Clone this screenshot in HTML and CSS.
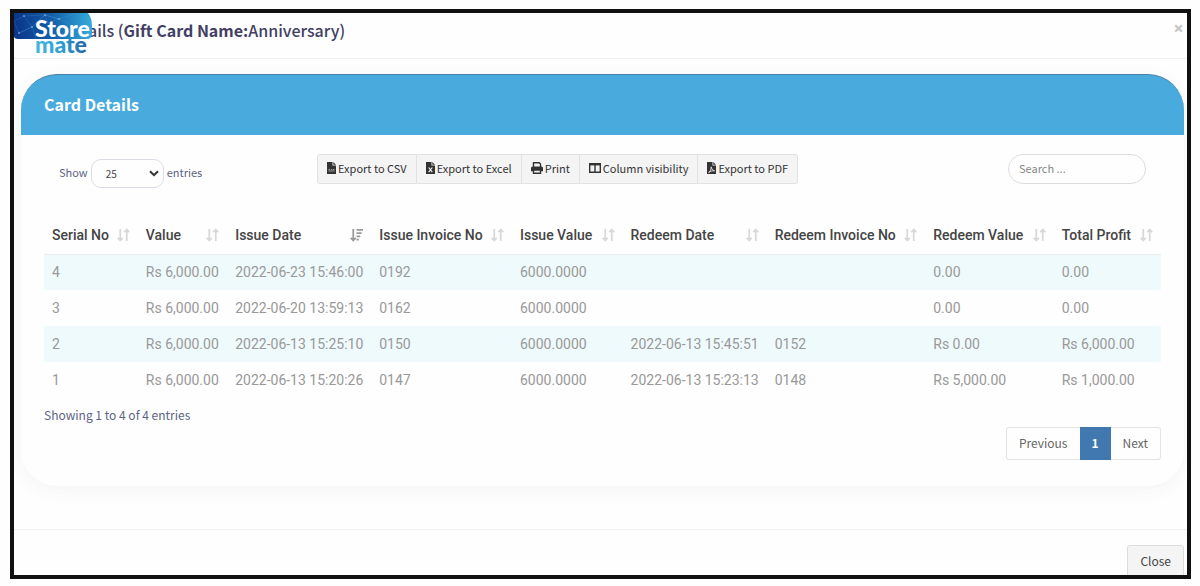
FILE: index.html
```html
<!DOCTYPE html>
<html lang="en">
<head>
    <meta charset="UTF-8">
    <meta name="viewport" content="width=device-width, initial-scale=1.0">
    <title>Gift Card Details</title>
    <link rel="stylesheet" href="styles.css">
</head>
<body>
    <svg class="sprite" aria-hidden="true">
        <symbol id="sort" viewBox="0 0 14 14">
            <path d="M3.5 0.5v12M0.8 10l2.7 2.8L6.2 10M10.5 13.5v-12M7.8 4l2.7-2.8L13.2 4" fill="none" stroke="currentColor" stroke-width="1.9"/>
        </symbol>
        <symbol id="sort-desc" viewBox="0 0 14 14">
            <path d="M3.5 0.5v12M0.8 10l2.7 2.8L6.2 10M7 1.5h7M7 5h5.5M7 8.5h4M7 12h2.5" fill="none" stroke="currentColor" stroke-width="1.9"/>
        </symbol>
    </svg>

    <div class="modal">
        <svg class="logo" width="82" height="46" viewBox="0 0 82 46" role="img" aria-label="Store mate">
            <defs>
                <linearGradient id="logoBg" x1="0" y1="0" x2="1" y2="0">
                    <stop offset="0" stop-color="#0b3488"/>
                    <stop offset="0.5" stop-color="#1260ab"/>
                    <stop offset="1" stop-color="#37acdc"/>
                </linearGradient>
                <linearGradient id="logoText" x1="0" y1="0" x2="1" y2="0">
                    <stop offset="0" stop-color="#43b9e0"/>
                    <stop offset="0.5" stop-color="#2f9fd2"/>
                    <stop offset="1" stop-color="#2464a4"/>
                </linearGradient>
            </defs>
            <path d="M0 0H74Q78 5 78 13V20Q78 26 73 26H4Q0 26 0 23Z" fill="url(#logoBg)"/>
            <path d="M0 8L10 3L18 14L5 20L0 8M10 3L31 2L18 14L31 2L45 6L60 1M5 20L18 14L22 25M45 6L31 2L34 10L45 6L54 10" fill="none" stroke="#6fa8dc" stroke-width="0.5" opacity="0.4"/>
            <g fill="#8cc0ea" opacity="0.7">
                <circle cx="10" cy="3" r="0.9"/>
                <circle cx="18" cy="14" r="0.9"/>
                <circle cx="5" cy="20" r="0.9"/>
                <circle cx="31" cy="2" r="0.9"/>
                <circle cx="45" cy="6" r="0.9"/>
            </g>
            <text x="21" y="24" class="logo-text" fill="#fff">Store</text>
            <text x="21" y="40" class="logo-text" fill="url(#logoText)">mate</text>
        </svg>

        <div class="modal-header">
            <h4 class="modal-title">ails (<b>Gift Card Name:</b>Anniversary)</h4>
            <button type="button" class="close" aria-label="Dismiss">&times;</button>
        </div>

        <div class="modal-body">
            <div class="card">
                <div class="card-header">
                    <h3>Card Details</h3>
                </div>
                <div class="card-body">
                    <div class="toolbar">
                        <div class="length">
                            <label for="length">Show</label>
                            <div class="select-wrap">
                                <select id="length">
                                    <option>25</option>
                                    <option>50</option>
                                    <option>100</option>
                                </select>
                                <svg width="10" height="7" viewBox="0 0 10 7"><path d="M1 1.2l4 4 4-4" fill="none" stroke="#333" stroke-width="2"/></svg>
                            </div>
                            <span>entries</span>
                        </div>
                        <div class="btn-group">
                            <button type="button">
                                <svg width="9" height="12" viewBox="0 0 9 12"><path d="M0 0h5.5v3.5H9V12H0zM6.3 0L9 2.8H6.3z" fill="#333"/><path d="M1.5 7.5h1.5M3.8 7.5h1.5M6 7.5h1.5M1.5 9h6" stroke="#aaa" stroke-width="0.9"/></svg>
                                Export to CSV
                            </button>
                            <button type="button">
                                <svg width="9" height="12" viewBox="0 0 9 12"><path d="M0 0h5.5v3.5H9V12H0zM6.3 0L9 2.8H6.3z" fill="#333"/><path d="M2.7 5.5l3.6 4.7M6.3 5.5L2.7 10.2" stroke="#f4f4f4" stroke-width="1.2"/></svg>
                                Export to Excel
                            </button>
                            <button type="button">
                                <svg width="12" height="12" viewBox="0 0 12 12"><path d="M2.5 5V0.8h5.8l1.2 1.2V5" fill="none" stroke="#333" stroke-width="1.4"/><path d="M1.5 4.6h9Q12 4.6 12 6.1V9.2H0V6.1Q0 4.6 1.5 4.6z" fill="#333"/><path d="M2.5 8h7v3.3h-7z" fill="#f4f4f4" stroke="#333" stroke-width="1.4"/></svg>
                                Print
                            </button>
                            <button type="button">
                                <svg width="12" height="12" viewBox="0 0 12 12"><path d="M0.7 1.7h10.6v8.6H0.7zM6 2v8" fill="none" stroke="#333" stroke-width="1.4"/><path d="M0 1h12v2.4H0z" fill="#333"/></svg>
                                Column visibility
                            </button>
                            <button type="button">
                                <svg width="9" height="12" viewBox="0 0 9 12"><path d="M0 0h5.5v3.5H9V12H0zM6.3 0L9 2.8H6.3z" fill="#333"/><path d="M1.7 10.5Q4.5 8.5 4.2 4.8Q4.4 8.3 7.6 8.8Q4.5 8.4 1.7 10.5" fill="none" stroke="#f4f4f4" stroke-width="0.8"/></svg>
                                Export to PDF
                            </button>
                        </div>
                        <input type="search" class="search" placeholder="Search ..." aria-label="Search">
                    </div>

                    <table>
                        <colgroup>
                            <col class="c-serial">
                            <col class="c-value">
                            <col class="c-date">
                            <col class="c-issue-no">
                            <col class="c-issue-value">
                            <col class="c-date">
                            <col class="c-redeem-no">
                            <col class="c-redeem-value">
                            <col class="c-profit">
                        </colgroup>
                        <thead>
                            <tr>
                                <th><div>Serial No <svg><use href="#sort"/></svg></div></th>
                                <th><div>Value <svg><use href="#sort"/></svg></div></th>
                                <th><div>Issue Date <svg class="active"><use href="#sort-desc"/></svg></div></th>
                                <th><div>Issue Invoice No <svg><use href="#sort"/></svg></div></th>
                                <th><div>Issue Value <svg><use href="#sort"/></svg></div></th>
                                <th><div>Redeem Date <svg><use href="#sort"/></svg></div></th>
                                <th><div>Redeem Invoice No <svg><use href="#sort"/></svg></div></th>
                                <th><div>Redeem Value <svg><use href="#sort"/></svg></div></th>
                                <th><div>Total Profit <svg><use href="#sort"/></svg></div></th>
                            </tr>
                        </thead>
                        <tbody>
                            <tr>
                                <td>4</td>
                                <td>Rs 6,000.00</td>
                                <td>2022-06-23 15:46:00</td>
                                <td>0192</td>
                                <td>6000.0000</td>
                                <td></td>
                                <td></td>
                                <td>0.00</td>
                                <td>0.00</td>
                            </tr>
                            <tr>
                                <td>3</td>
                                <td>Rs 6,000.00</td>
                                <td>2022-06-20 13:59:13</td>
                                <td>0162</td>
                                <td>6000.0000</td>
                                <td></td>
                                <td></td>
                                <td>0.00</td>
                                <td>0.00</td>
                            </tr>
                            <tr>
                                <td>2</td>
                                <td>Rs 6,000.00</td>
                                <td>2022-06-13 15:25:10</td>
                                <td>0150</td>
                                <td>6000.0000</td>
                                <td>2022-06-13 15:45:51</td>
                                <td>0152</td>
                                <td>Rs 0.00</td>
                                <td>Rs 6,000.00</td>
                            </tr>
                            <tr>
                                <td>1</td>
                                <td>Rs 6,000.00</td>
                                <td>2022-06-13 15:20:26</td>
                                <td>0147</td>
                                <td>6000.0000</td>
                                <td>2022-06-13 15:23:13</td>
                                <td>0148</td>
                                <td>Rs 5,000.00</td>
                                <td>Rs 1,000.00</td>
                            </tr>
                        </tbody>
                    </table>

                    <div class="info">Showing 1 to 4 of 4 entries</div>
                    <nav class="pagination" aria-label="Pages">
                        <a href="#">Previous</a>
                        <a href="#" class="current">1</a>
                        <a href="#">Next</a>
                    </nav>
                </div>
            </div>
        </div>

        <div class="modal-footer">
            <button type="button" class="btn-close">Close</button>
        </div>
    </div>
</body>
</html>
```
FILE: styles.css
```css
* {
    box-sizing: border-box;
}
body {
    margin: 0;
    padding: 9px 9px 7px 10px;
    height: 100vh;
    background-color: #fefefe;
    font-family: "Noto Sans CJK SC", "Open Sans", sans-serif;
    font-size: 12px;
    line-height: 20px;
    color: #5c6484;
}
button, input, select {
    font-family: inherit;
}
.sprite {
    display: none;
}
.modal {
    position: relative;
    height: 100%;
    overflow: hidden;
    border: 4px solid #111;
    background-color: #fefefe;
}
/* logo floats over the title */
.logo {
    position: absolute;
    left: 0;
    top: 0;
}
.logo-text {
    font-family: Lato, sans-serif;
    font-size: 23px;
    font-weight: 900;
}
.modal-header {
    display: flex;
    justify-content: space-between;
    align-items: flex-start;
    height: 46px;
    padding: 6px 4px 0 74px;
    border-bottom: 1px solid #f0f0f0;
}
.modal-title {
    margin: 0;
    font-size: 16px;
    line-height: 22px;
    font-weight: 500;
    color: #423f63;
}
.close {
    padding: 0;
    border: none;
    background: none;
    font-family: Roboto, sans-serif;
    font-size: 17px;
    line-height: 18px;
    font-weight: 700;
    color: #c4c4c4;
    cursor: pointer;
}
.modal-body {
    padding: 15px 3px 43px 7px;
}
.card {
    border-radius: 36px;
    background-color: #fefefe;
    box-shadow: 0 4px 18px rgba(60, 90, 110, 0.06);
}
.card-header {
    padding: 19px 23px 21px;
    border-top: 1px solid #4b83a8;
    border-radius: 36px 36px 0 0;
    background-color: #48aadd;
}
.card-header h3 {
    margin: 0;
    font-size: 16px;
    line-height: 20px;
    font-weight: 700;
    color: #fff;
}
.card-body {
    padding: 19px 23px 26px;
}
.toolbar {
    display: grid;
    grid-template-columns: 258px 1fr auto;
    align-items: start;
    padding: 0 15px;
}
.length {
    display: flex;
    align-items: center;
    gap: 3px;
    padding-top: 5px;
    font-size: 11px;
    line-height: 24px;
}
.length label, .length span {
    padding-bottom: 3px;
}
.select-wrap {
    display: grid;
    align-items: center;
}
.select-wrap select, .select-wrap svg {
    grid-area: 1 / 1;
}
.select-wrap svg {
    justify-self: end;
    margin-right: 5px;
    pointer-events: none;
}
.length select {
    width: 73px;
    height: 29px;
    padding: 0 14px;
    appearance: none;
    border: 1px solid #dcdce6;
    border-radius: 10px;
    background-color: #fefefe;
    font-size: 10px;
    color: #444;
}
.btn-group {
    display: flex;
}
.btn-group button {
    display: flex;
    align-items: center;
    gap: 2px;
    height: 30px;
    padding: 0 9px 2px;
    border: 1px solid #e2e2e2;
    border-left-width: 0;
    background-color: #f4f4f4;
    font-size: 11px;
    color: #333;
    white-space: nowrap;
    cursor: pointer;
}
.btn-group button:first-child {
    border-left-width: 1px;
    border-radius: 3px 0 0 3px;
}
.btn-group button:last-child {
    border-radius: 0 3px 3px 0;
}
.search {
    width: 138px;
    height: 30px;
    padding: 0 10px 2px;
    border: 1px solid #ddd;
    border-radius: 15px;
    background-color: #fefefe;
    font-size: 11px;
}
.search::placeholder {
    color: #888;
}
table {
    width: 100%;
    margin-top: 29px;
    border-collapse: collapse;
    table-layout: fixed;
    font-family: Roboto, sans-serif;
    font-size: 14px;
    color: #999;
}
.c-serial { width: 8.4%; }
.c-value { width: 8%; }
.c-date { width: 12.9%; }
.c-issue-no { width: 12.6%; }
.c-issue-value { width: 9.9%; }
.c-redeem-no { width: 14.2%; }
.c-redeem-value { width: 11.5%; }
.c-profit { width: 9.6%; }
th {
    height: 37px;
    padding: 0 8px;
    border-bottom: 1px solid #eee;
    text-align: left;
    font-weight: 500;
    color: #444;
    white-space: nowrap;
}
th div {
    display: flex;
    justify-content: space-between;
    align-items: center;
}
th svg {
    width: 13px;
    height: 14px;
    color: #d8d8d8;
}
th svg.active {
    color: #999;
}
td {
    height: 36px;
    padding: 0 8px;
    white-space: nowrap;
}
tbody tr:nth-child(odd) {
    background-color: #effafd;
}
.info {
    margin-top: 7px;
}
.pagination {
    display: flex;
    justify-content: flex-end;
    margin-top: 2px;
}
.pagination a {
    padding: 5px 12px 7px;
    border: 1px solid #e4e4e4;
    border-width: 1px 0;
    font-size: 12px;
    line-height: 19px;
    color: #666;
    text-decoration: none;
}
.pagination a:first-child {
    border-left-width: 1px;
    border-radius: 3px 0 0 3px;
}
.pagination a:last-child {
    border-right-width: 1px;
    border-radius: 0 3px 3px 0;
}
.pagination a.current {
    border-color: #4178b0;
    background-color: #4178b0;
    font-weight: 700;
    color: #fff;
}
.modal-footer {
    display: flex;
    justify-content: flex-end;
    padding: 15px 3px;
    border-top: 1px solid #f0f0f0;
}
.btn-close {
    padding: 5px 12px 7px;
    border: 1px solid #ddd;
    border-radius: 3px;
    background-color: #f4f4f4;
    font-size: 12px;
    line-height: 20px;
    color: #444;
    cursor: pointer;
}
```
